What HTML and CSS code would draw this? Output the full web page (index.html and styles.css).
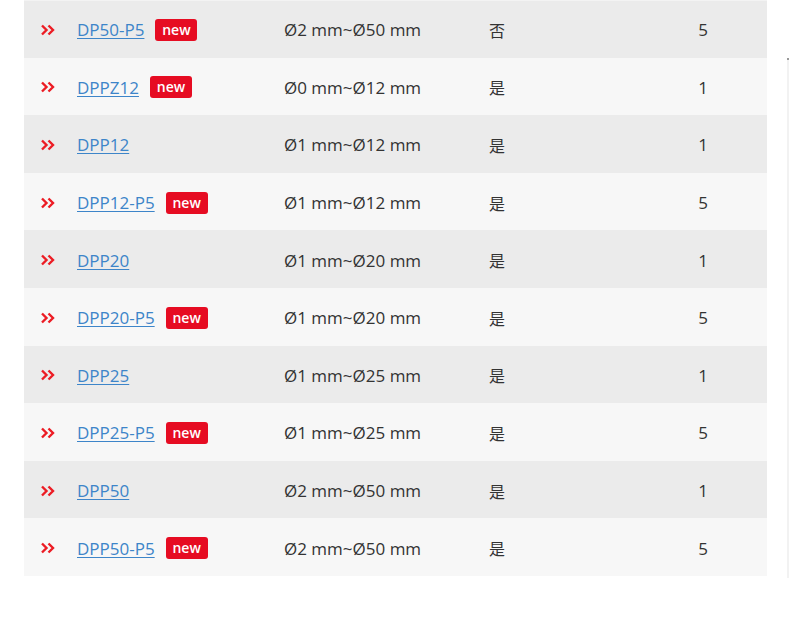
FILE: index.html
```html
<!DOCTYPE html>
<html lang="zh">
<head>
<meta charset="utf-8">
<link rel="stylesheet" href="styles.css">
</head>
<body>
<div class="page">
  <div class="table">
    <div class="row odd">
      <div class="c-icon"><svg class="chev" viewBox="0 0 14 12"><polyline points="1,1.5 5.5,6 1,10.5"/><polyline points="7.5,1.5 12,6 7.5,10.5"/></svg></div>
      <div class="c-name"><a href="#">DP50-P5</a><span class="badge">new</span></div>
      <div class="c-range">Ø2 mm~Ø50 mm</div>
      <div class="c-yes">否</div>
      <div class="c-num">5</div>
    </div>
    <div class="row even">
      <div class="c-icon"><svg class="chev" viewBox="0 0 14 12"><polyline points="1,1.5 5.5,6 1,10.5"/><polyline points="7.5,1.5 12,6 7.5,10.5"/></svg></div>
      <div class="c-name"><a href="#">DPPZ12</a><span class="badge">new</span></div>
      <div class="c-range">Ø0 mm~Ø12 mm</div>
      <div class="c-yes">是</div>
      <div class="c-num">1</div>
    </div>
    <div class="row odd">
      <div class="c-icon"><svg class="chev" viewBox="0 0 14 12"><polyline points="1,1.5 5.5,6 1,10.5"/><polyline points="7.5,1.5 12,6 7.5,10.5"/></svg></div>
      <div class="c-name"><a href="#">DPP12</a></div>
      <div class="c-range">Ø1 mm~Ø12 mm</div>
      <div class="c-yes">是</div>
      <div class="c-num">1</div>
    </div>
    <div class="row even">
      <div class="c-icon"><svg class="chev" viewBox="0 0 14 12"><polyline points="1,1.5 5.5,6 1,10.5"/><polyline points="7.5,1.5 12,6 7.5,10.5"/></svg></div>
      <div class="c-name"><a href="#">DPP12-P5</a><span class="badge">new</span></div>
      <div class="c-range">Ø1 mm~Ø12 mm</div>
      <div class="c-yes">是</div>
      <div class="c-num">5</div>
    </div>
    <div class="row odd">
      <div class="c-icon"><svg class="chev" viewBox="0 0 14 12"><polyline points="1,1.5 5.5,6 1,10.5"/><polyline points="7.5,1.5 12,6 7.5,10.5"/></svg></div>
      <div class="c-name"><a href="#">DPP20</a></div>
      <div class="c-range">Ø1 mm~Ø20 mm</div>
      <div class="c-yes">是</div>
      <div class="c-num">1</div>
    </div>
    <div class="row even">
      <div class="c-icon"><svg class="chev" viewBox="0 0 14 12"><polyline points="1,1.5 5.5,6 1,10.5"/><polyline points="7.5,1.5 12,6 7.5,10.5"/></svg></div>
      <div class="c-name"><a href="#">DPP20-P5</a><span class="badge">new</span></div>
      <div class="c-range">Ø1 mm~Ø20 mm</div>
      <div class="c-yes">是</div>
      <div class="c-num">5</div>
    </div>
    <div class="row odd">
      <div class="c-icon"><svg class="chev" viewBox="0 0 14 12"><polyline points="1,1.5 5.5,6 1,10.5"/><polyline points="7.5,1.5 12,6 7.5,10.5"/></svg></div>
      <div class="c-name"><a href="#">DPP25</a></div>
      <div class="c-range">Ø1 mm~Ø25 mm</div>
      <div class="c-yes">是</div>
      <div class="c-num">1</div>
    </div>
    <div class="row even">
      <div class="c-icon"><svg class="chev" viewBox="0 0 14 12"><polyline points="1,1.5 5.5,6 1,10.5"/><polyline points="7.5,1.5 12,6 7.5,10.5"/></svg></div>
      <div class="c-name"><a href="#">DPP25-P5</a><span class="badge">new</span></div>
      <div class="c-range">Ø1 mm~Ø25 mm</div>
      <div class="c-yes">是</div>
      <div class="c-num">5</div>
    </div>
    <div class="row odd">
      <div class="c-icon"><svg class="chev" viewBox="0 0 14 12"><polyline points="1,1.5 5.5,6 1,10.5"/><polyline points="7.5,1.5 12,6 7.5,10.5"/></svg></div>
      <div class="c-name"><a href="#">DPP50</a></div>
      <div class="c-range">Ø2 mm~Ø50 mm</div>
      <div class="c-yes">是</div>
      <div class="c-num">1</div>
    </div>
    <div class="row even">
      <div class="c-icon"><svg class="chev" viewBox="0 0 14 12"><polyline points="1,1.5 5.5,6 1,10.5"/><polyline points="7.5,1.5 12,6 7.5,10.5"/></svg></div>
      <div class="c-name"><a href="#">DPP50-P5</a><span class="badge">new</span></div>
      <div class="c-range">Ø2 mm~Ø50 mm</div>
      <div class="c-yes">是</div>
      <div class="c-num">5</div>
    </div>
  </div>
  <div class="edge"></div>
</div>
</body>
</html>
```
FILE: styles.css
```css
html, body {
  margin: 0;
  padding: 0;
  background: #ffffff;
}
body {
  font-family: "Open Sans", "Noto Sans CJK SC", sans-serif;
  font-size: 17px;
  color: #333333;
}
.page {
  display: flex;
  align-items: flex-start;
  padding-left: 24px;
}
.table {
  width: 743px;
  display: flex;
  flex-direction: column;
}
.row {
  display: grid;
  grid-template-columns: 53px 207px 205px 146px 132px;
  align-items: center;
  height: 57.6px;
  padding-top: 2px;
  box-sizing: border-box;
}
.row.odd { background: #ebebeb; }
.row.even { background: #f7f7f7; }
.row:first-child { box-shadow: inset 0 1px 0 #f3f3f3; }
.c-icon {
  display: flex;
  justify-content: flex-end;
  padding-right: 22px;
}
.chev {
  width: 14px;
  height: 12px;
  fill: none;
  stroke: #ec1c24;
  stroke-width: 2.4;
}
.c-name {
  display: flex;
  align-items: center;
  gap: 11px;
}
.c-name a {
  color: #3d85c9;
  text-decoration: underline;
  text-underline-offset: 2px;
  text-decoration-thickness: 1px;
}
.badge {
  display: inline-flex;
  align-items: center;
  justify-content: center;
  width: 42px;
  height: 22px;
  border-radius: 3px;
  background: #e60c22;
  color: #ffffff;
  font-family: "Open Sans", sans-serif;
  font-weight: 600;
  font-size: 14px;
  line-height: 1;
}
.c-yes {
  font-size: 16px;
}
.c-num {
  text-align: center;
  padding-left: 4px;
}
.edge {
  width: 2px;
  height: 518px;
  margin-top: 58px;
  margin-left: 20px;
  background: #f2f2f2;
  border-top: 2px solid #999999;
}
```
